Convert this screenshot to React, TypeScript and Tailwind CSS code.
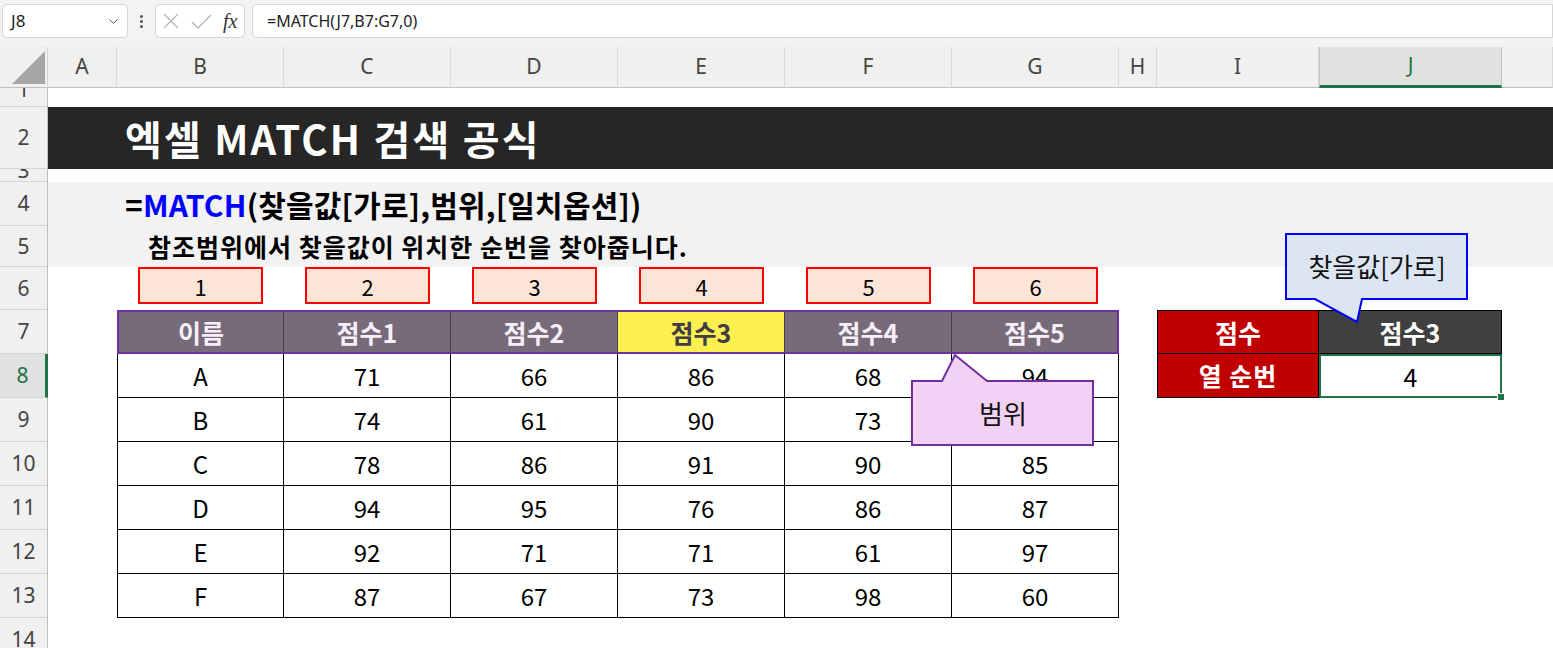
import React from 'react';
import { ChevronDown } from 'lucide-react';

const GRID = 'grid grid-cols-[48px_69px_167px_167px_167px_167px_167px_167px_38px_162px_183px_1fr]';

const headers = ['이름', '점수1', '점수2', '점수3', '점수4', '점수5'];

// G9 sits under the 범위 callout in the reference, so it's left blank
const rows = [
  ['A', '71', '66', '86', '68', '94'],
  ['B', '74', '61', '90', '73', ''],
  ['C', '78', '86', '91', '90', '85'],
  ['D', '94', '95', '76', '86', '87'],
  ['E', '92', '71', '71', '61', '97'],
  ['F', '87', '67', '73', '98', '60'],
];

const letters = ['A', 'B', 'C', 'D', 'E', 'F', 'G', 'H', 'I', 'J', ''];

function Row({ n, h, sel, up, children }: { n: string; h: string; sel?: boolean; up?: boolean; children?: React.ReactNode }) {
  return (
    <div className={`${GRID} ${h}`}>
      <div
        className={`flex justify-center overflow-hidden border-b border-b-[#d4d4d4] font-['Noto_Sans',sans-serif] text-[21px] leading-none ${
          up ? 'items-start' : 'items-center'
        } ${
          sel
            ? 'bg-[#e1e1e1] text-[#217346] border-r-[3px] border-r-[#217346]'
            : 'bg-[#f0f0f0] text-[#444] border-r border-r-[#bfbfbf]'
        }`}
      >
        <span className={up ? '-mt-[9px]' : ''}>{n}</span>
      </div>
      {children}
    </div>
  );
}

export default function App() {
  return (
    <div className="relative w-[1553px] h-[648px] overflow-hidden bg-white font-['Noto_Sans_CJK_KR',sans-serif] text-black">
      {/* Formula bar */}
      <div className="h-[47px] bg-[#f3f3f3] flex items-start pt-[4px] pl-[2px] font-['Noto_Sans',sans-serif]">
        <div className="w-[126px] h-[34px] bg-white border border-[#d6d6d6] rounded-[5px] flex items-center justify-between pl-[8px] pr-[6px] text-[17px] text-[#222]">
          <span>J8</span>
          <ChevronDown className="w-[15px] h-[15px] text-[#555]" strokeWidth={1.6} />
        </div>
        <div className="w-[27px] h-[34px] flex flex-col items-center justify-center gap-[2px]">
          <span className="w-[3px] h-[3px] bg-[#555] rounded-full" />
          <span className="w-[3px] h-[3px] bg-[#555] rounded-full" />
          <span className="w-[3px] h-[3px] bg-[#555] rounded-full" />
        </div>
        <div className="w-[90px] h-[34px] bg-white border border-[#d6d6d6] rounded-[5px] flex items-center pl-[7px] gap-[10px]">
          <svg width="50" height="20" viewBox="0 0 50 20" fill="none" stroke="#b4b4b4" strokeWidth="1.3">
            <path d="M1,3 L15,17 M15,3 L1,17" />
            <path d="M29,11 L35,17 L48,4" />
          </svg>
          <span className="font-['Liberation_Serif',serif] italic text-[20px] text-[#333] leading-none">fx</span>
        </div>
        <div className="ml-[7px] flex-1 h-[34px] bg-white border border-[#d6d6d6] rounded-l-[5px] flex items-center pl-[14px] text-[16px] text-[#222]">
          =MATCH(J7,B7:G7,0)
        </div>
      </div>

      {/* Column headers */}
      <div className={`${GRID} h-[41px] bg-[#f0f0f0] font-['Noto_Sans',sans-serif] text-[21px]`}>
        <div className="border-b border-[#bfbfbf] border-r border-r-[#d4d4d4]">
          <svg width="48" height="40" viewBox="0 0 48 40">
            <polygon points="12,37 45,4 45,37" fill="#a6a6a6" />
          </svg>
        </div>
        {letters.map((l) =>
          l === 'J' ? (
            <div
              key={l}
              className="flex items-center justify-center bg-[#e1e1e1] text-[#217346] border-b-[3px] border-b-[#217346] border-x border-x-[#c6c6c6]"
            >
              {l}
            </div>
          ) : (
            <div
              key={l || 'K'}
              className="flex items-center justify-center text-[#444] border-b border-b-[#bfbfbf] border-r border-r-[#d9d9d9]"
            >
              {l}
            </div>
          )
        )}
      </div>

      <Row n="1" h="h-[19px]" up />

      {/* Row 2 title band */}
      <Row n="2" h="h-[62px]">
        <div className="col-span-11 bg-[#262626] flex items-center pl-[77px] text-white text-[40px] font-bold leading-none tracking-[2.2px]">
          엑셀 MATCH 검색 공식
        </div>
      </Row>

      <Row n="3" h="h-[13px]" up />

      {/* Rows 4-5 syntax */}
      <Row n="4" h="h-[44px]">
        <div className="col-span-11 bg-[#f2f2f2] flex items-center pl-[77px] text-[30px] font-bold leading-none tracking-[0.2px]">
          <span>=</span>
          <span className="text-[#0000ff]">MATCH</span>
          <span>(찾을값[가로],범위,[일치옵션])</span>
        </div>
      </Row>
      <Row n="5" h="h-[41px]">
        <div className="col-span-11 bg-[#f2f2f2] flex items-center pl-[100px] text-[25px] font-bold leading-none tracking-[1px]">
          참조범위에서 찾을값이 위치한 순번을 찾아줍니다.
        </div>
      </Row>

      {/* Row 6 column numbers */}
      <Row n="6" h="h-[43px]">
        <div />
        {[1, 2, 3, 4, 5, 6].map((v) => (
          <div key={v} className="flex justify-center items-start">
            <div className="w-[125px] h-[37px] border-2 border-[#ff0000] bg-[#fce4d6] flex items-center justify-center text-[22px] leading-none">
              {v}
            </div>
          </div>
        ))}
        <div />
        <div />
        <div />
        <div />
      </Row>

      {/* Row 7 headers */}
      <Row n="7" h="h-[44px]">
        <div />
        {headers.map((t, i) => (
          <div
            key={t}
            className={`flex items-center justify-center text-[25px] font-bold leading-none border-y-2 border-y-[#7030a0] ${
              i === 3 ? 'bg-[#fcf051] text-[#433c46]' : 'bg-[#776b79] text-[#f7eefa]'
            } ${i === 0 ? 'border-l-2 border-l-[#7030a0]' : ''} ${
              i === 5 ? 'border-r-2 border-r-[#7030a0]' : 'border-r border-r-[#4a3f4c]'
            }`}
          >
            {t}
          </div>
        ))}
        <div />
        <div className="flex items-center justify-center bg-[#c00000] text-white text-[25px] font-bold leading-none border border-black">
          점수
        </div>
        <div className="flex items-center justify-center bg-[#404040] text-white text-[25px] font-bold leading-none border-y border-r border-black">
          점수3
        </div>
        <div />
      </Row>

      {/* Rows 8-13 data */}
      {rows.map((r, ri) => (
        <Row key={r[0]} n={String(8 + ri)} h="h-[44px]" sel={ri === 0}>
          <div />
          {r.map((c, ci) => (
            <div
              key={ci}
              className={`flex items-center justify-center bg-white text-[24px] leading-none border-r border-b border-black ${
                ci === 0 ? 'border-l' : ''
              }`}
            >
              {c}
            </div>
          ))}
          <div />
          {ri === 0 ? (
            <>
              <div className="flex items-center justify-center bg-[#c00000] text-white text-[25px] font-bold leading-none tracking-[1px] border-x border-b border-black">
                열 순번
              </div>
              <div className="relative flex items-center justify-center bg-white text-[25px] leading-none border-2 border-[#217346]">
                4
                <span className="absolute -right-[5px] -bottom-[5px] w-[8px] h-[8px] bg-[#217346] border border-white" />
              </div>
            </>
          ) : (
            <>
              <div />
              <div />
            </>
          )}
          <div />
        </Row>
      ))}

      <Row n="14" h="h-[44px]" />

      {/* Callout: 찾을값[가로] */}
      <div className="absolute left-[1285px] top-[233px] w-[184px] h-[92px]">
        <svg width="184" height="92" viewBox="0 0 184 92" className="absolute inset-0">
          <path d="M1,1 H182 V66 H77 L72,89 L30,66 H1 Z" fill="#dce6f2" stroke="#0000ff" strokeWidth="2" />
        </svg>
        <div className="relative h-[66px] flex items-center justify-center text-[26px] leading-none text-[#111]">
          찾을값[가로]
        </div>
      </div>

      {/* Callout: 범위 */}
      <div className="absolute left-[911px] top-[353px] w-[184px] h-[94px]">
        <svg width="184" height="94" viewBox="0 0 184 94" className="absolute inset-0">
          <path d="M1,28 H31 L44,2 L76,28 H182 V92 H1 Z" fill="#f2d2f4" stroke="#7030a0" strokeWidth="2" />
        </svg>
        <div className="relative mt-[28px] h-[64px] flex items-center justify-center text-[26px] leading-none text-[#111]">
          범위
        </div>
      </div>
    </div>
  );
}
